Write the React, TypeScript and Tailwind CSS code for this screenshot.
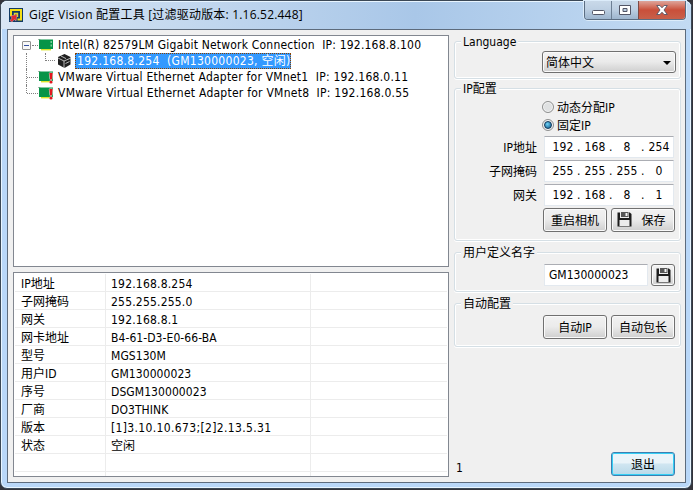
import React from 'react';

const nodes = [
  { name: 'Intel(R) 82579LM Gigabit Network Connection  IP: 192.168.8.100', cls: 'tracking-[0.2px]' },
  { name: 'VMware Virtual Ethernet Adapter for VMnet1  IP: 192.168.0.11', cls: 'tracking-[0.23px]' },
  { name: 'VMware Virtual Ethernet Adapter for VMnet8  IP: 192.168.0.55', cls: 'tracking-[0.25px]' },
];

const rows = [
  ['IP地址', '192.168.8.254'],
  ['子网掩码', '255.255.255.0'],
  ['网关', '192.168.8.1'],
  ['网卡地址', 'B4-61-D3-E0-66-BA'],
  ['型号', 'MGS130M'],
  ['用户ID', 'GM130000023'],
  ['序号', 'DSGM130000023'],
  ['厂商', 'DO3THINK'],
  ['版本', '[1]3.10.10.673;[2]2.13.5.31'],
  ['状态', '空闲'],
  ['', ''],
];

function Card({ alert = false }: { alert?: boolean }) {
  return (
    <svg width="16" height="14" viewBox="0 0 16 14" className="shrink-0">
      <path d="M0 1.5h2v9" fill="none" stroke="#a9b5ad" />
      <path d="M1 1.5h14V11H1z" fill="#079447" />
      <path d="M3 11h10v1.4H3z" fill="#d9e52a" />
      <path d="M12.5 3h1.5v2h-1.5zM12.5 6.5h1.5v2h-1.5z" fill="#7acb9a" />
      {alert && (
        <>
          <path d="M11.3 3h3.4l-.8 6.5h-1.8z" fill="#e2171e" stroke="#fff" strokeWidth=".8" paintOrder="stroke" />
          <circle cx="13" cy="12" r="1.6" fill="#e2171e" stroke="#fff" strokeWidth=".6" paintOrder="stroke" />
        </>
      )}
    </svg>
  );
}

function Disk() {
  return (
    <svg width="15" height="15" viewBox="0 0 15 15" className="shrink-0">
      <path d="M.5.5h12.3L14.5 2v12.5H.5z" fill="#1d1d1d" />
      <path d="M3 0h9v6H3z" fill="#ededed" />
      <path d="M4 0h7.5v5H4z" fill="#555" />
      <path d="M8.5 1h2v3h-2z" fill="#f4f4f4" />
      <path d="M2.5 8h10v6h-10z" fill="#ececec" />
    </svg>
  );
}

function Group({ title, className, children }: { title: string; className: string; children?: React.ReactNode }) {
  return (
    <section className={`flex w-[227px] flex-col rounded-[3px] border border-[#d5dfe5] shadow-[inset_0_0_0_1px_#fff,0_1px_0_#fff] ${className}`}>
      <h2 className="-mt-[8px] ml-[6px] h-4 self-start whitespace-nowrap bg-[#f0f0f0] px-[2px] leading-[17px]">{title}</h2>
      {children}
    </section>
  );
}

function Btn({ className = '', children }: { className?: string; children: React.ReactNode }) {
  return (
    <button className={`flex shrink-0 items-center justify-center rounded-[3px] border border-[#707070] bg-linear-to-b from-[#f2f2f2] from-0% via-[#ebebeb] via-48% to-[#cfcfcf] pt-[2px] shadow-[inset_0_0_0_1px_#fafafa] ${className}`}>
      {children}
    </button>
  );
}

function Radio({ label, on = false }: { label: string; on?: boolean }) {
  return (
    <div className="ml-[87px] flex h-[18px] items-center gap-[3px]">
      <span className="flex size-3 items-center justify-center rounded-full border border-[#8e8f8f] bg-[#dfe1e2] shadow-[inset_0_0_0_1px_#f5f5f5]">
        {on && <span className="size-[8px] rounded-full border border-[#123a5c] bg-radial-[at_40%_35%] from-[#6fd4f7] to-[#0b4f83]" />}
      </span>
      <span className="pt-px leading-4">{label}</span>
    </div>
  );
}

function Address({ label, parts }: { label: string; parts: string[] }) {
  return (
    <div className="mb-[2px] flex h-[22px] items-center">
      <span className="w-[82px] pt-px text-right leading-4">{label}</span>
      <div className="ml-[7px] flex h-[22px] w-[130px] items-center border border-[#e3e9ef] border-t-[#abadb3] bg-white pl-[7px] tracking-[0.2px]">
        {parts.map((p, i) => (
          <React.Fragment key={i}>
            <span className="w-[22px] text-center">{p}</span>
            {i < 3 && <span className="w-[10px] pl-[3px]">.</span>}
          </React.Fragment>
        ))}
      </div>
    </div>
  );
}

export default function App() {
  return (
    <div className="h-[490px] w-[693px] overflow-hidden bg-[#34343b] font-['DejaVu_Sans_Condensed','Noto_Sans_CJK_SC',sans-serif] text-[12px] leading-4 text-black">
      <div className="flex h-[489px] w-[692px] flex-col rounded-[7px] border border-[#3b4856] bg-[#b9d7f8] shadow-[inset_0_0_0_1px_#e8f5ff]">
        <header className="flex h-[28px] shrink-0 justify-between rounded-t-[6px] bg-linear-to-r from-[#d9e6f4] via-[#a9c7e8] via-60% to-[#c3dbf3] pl-2 shadow-[inset_0_1px_0_#e8f5ff]">
          <div className="flex items-center gap-[6px]">
            <svg width="14" height="15" viewBox="0 0 14 15">
              <path d="M0 0h14v14H0z" fill="#123b65" />
              <path d="M2 8V2h10v9.5H8.5" fill="none" stroke="#f5df16" strokeWidth="2" />
              <path d="M5.5 7V5.5h3V9" fill="none" stroke="#ded329" strokeWidth="1.4" />
              <path d="M1.5 8L8 6.5 7 13l-1.8-1.5L3 14l-2-1.5L3 10z" fill="#e12a30" stroke="#f3c6c0" strokeWidth=".4" />
            </svg>
            <h1 className="whitespace-pre font-['Open_Sans','Noto_Sans_CJK_SC',sans-serif] text-[12px] tracking-[0.2px]">GigE Vision 配置工具 [过滤驱动版本: 1.16.52.448]</h1>
          </div>
          <div className="mr-[5px] flex h-[19px] overflow-hidden rounded-b-[4px] border border-t-0 border-[#5b6d82] shadow-[0_0_0_1px_#dcecfa]">
            <div className="flex w-[27px] items-center justify-center border-r border-[#6c7f94] bg-linear-to-b from-[#c9d9e9] via-[#bed0e3] via-45% to-[#9db5ce] pt-[5px]">
              <svg width="13" height="6" viewBox="0 0 13 6"><rect x=".5" y=".5" width="12" height="4" rx="1" fill="#fff" stroke="#535666" /></svg>
            </div>
            <div className="flex w-[27px] items-center justify-center border-r border-[#7d4a45] bg-linear-to-b from-[#c9d9e9] via-[#bed0e3] via-45% to-[#9db5ce]">
              <svg width="12" height="10" viewBox="0 0 12 10"><path d="M.5.5h11v9H.5zM4 3.5v3h4v-3z" fill="#fff" fillRule="evenodd" stroke="#535666" /></svg>
            </div>
            <div className="flex w-[46px] items-center justify-center bg-linear-to-b from-[#dda49a] via-[#c94f3a] via-50% to-[#c8604a]">
              <svg width="12" height="10" viewBox="0 0 12 10"><path d="M.7.5h3.2L6 2.8 8.1.5h3.2L8 5l3.3 4.5H8.1L6 7.2 3.9 9.5H.7L4 5z" fill="#fff" stroke="#535666" strokeWidth=".9" /></svg>
            </div>
          </div>
        </header>

        <main className="ml-[6px] flex h-[454px] w-[679px] gap-[5px] border border-[#5d6b7c] bg-[#f0f0f0] pl-[5px]">
          <div className="flex w-[436px] shrink-0 flex-col gap-[5px] pt-[5px]">
            <div className="h-[232px] border border-[#828790] bg-white pt-px">
              <div className="flex h-4 items-center pl-[8px]">
                <span className="flex size-[9px] items-center justify-center rounded-[1px] border border-[#919191] bg-[#f7f7f7]"><span className="h-px w-[5px] bg-[#3550a0]" /></span>
                <span className="ml-px w-[6px] border-t border-dotted border-[#808080]" />
                <Card />
                <span className={`ml-[4px] whitespace-pre ${nodes[0].cls}`}>{nodes[0].name}</span>
              </div>
              <div className="flex h-4 items-center pl-[12px]">
                <span className="h-4 w-[19px] border-l border-dotted border-[#808080]" />
                <span className="-mt-2 mr-[2px] h-2 w-[10px] border-b border-l border-dotted border-[#808080]" />
                <svg width="15" height="14" viewBox="0 0 15 14" className="shrink-0">
                  <path d="M7.5 0l6 3v7.5l-6 3.5L1 10.5V3z" fill="#202020" />
                  <path d="M1 4l6 3v7M14 4L7 7M4 2l5 2.6M8.5 9.5l4-2" fill="none" stroke="#ddd" strokeWidth=".8" />
                </svg>
                <span className="ml-[3px] flex h-4 w-[216px] items-center whitespace-pre bg-[#3399ff] pl-[2px] tracking-[0.28px] text-white outline-1 -outline-offset-1 outline-dotted outline-[#8a4200]">192.168.8.254  (GM130000023, 空闲)</span>
              </div>
              {nodes.slice(1).map((n, i) => (
                <div key={n.name} className="flex h-4 items-center pl-[12px]">
                  <span className={`w-0 border-l border-dotted border-[#808080] ${i === 0 ? 'h-4' : 'h-2 self-start'}`} />
                  <span className="w-[11px] border-t border-dotted border-[#808080]" />
                  <Card alert />
                  <span className={`ml-[4px] whitespace-pre ${n.cls}`}>{n.name}</span>
                </div>
              ))}
            </div>
            <div className="h-[205px] overflow-hidden border border-[#828790] bg-white px-px pt-px">
              {rows.map(([k, v], i) => (
                <div key={i} className="grid h-[18px] grid-cols-[91px_205px_1fr] border-b border-[#ececec] leading-[21px]">
                  <span className="h-[17px] border-r border-[#ececec] pl-[6px]">{k}</span>
                  <span className={`h-[17px] whitespace-pre border-r border-[#ececec] pl-[5px] ${i === 8 ? 'tracking-[0.35px]' : i === 0 || i === 1 || i === 2 ? 'tracking-[0.2px]' : 'tracking-[0.07px]'}`}>{v}</span>
                  <span />
                </div>
              ))}
              <div className="grid h-1 grid-cols-[91px_205px_1fr]">
                <span className="border-r border-[#ececec]" />
                <span className="border-r border-[#ececec]" />
              </div>
            </div>
          </div>

          <aside className="flex flex-col">
            <Group title="Language" className="mt-[11px] h-[38px]">
              <div className="ml-[87px] mt-[1px] flex h-[22px] w-[134px] shrink-0 items-center justify-between rounded-[3px] border border-[#707070] bg-linear-to-b from-[#f2f2f2] via-[#ebebeb] via-48% to-[#cfcfcf] pl-[3px] pr-[4px] pt-[2px] shadow-[inset_0_0_0_1px_#fafafa]">
                <span>简体中文</span>
                <svg width="8" height="4" viewBox="0 0 8 4"><path d="M0 0h8L4 4z" /></svg>
              </div>
            </Group>
            <Group title="IP配置" className="mt-[9px] h-[153px]">
              <div className="mt-[1px]">
                <Radio label="动态分配IP" />
                <Radio label="固定IP" on />
              </div>
              <div className="mt-[2px]">
                <Address label="IP地址" parts={['192', '168', '8', '254']} />
                <Address label="子网掩码" parts={['255', '255', '255', '0']} />
                <Address label="网关" parts={['192', '168', '8', '1']} />
              </div>
              <div className="ml-[88px] flex gap-[4px]">
                <Btn className="h-6 w-[64px]">重启相机</Btn>
                <Btn className="h-6 w-[64px] gap-[9px] pr-[3px]"><span className="-mt-[3px]"><Disk /></span>保存</Btn>
              </div>
            </Group>
            <Group title="用户定义名字" className="mt-[11px] h-[40px]">
              <div className="ml-[89px] mt-[3px] flex gap-[3px]">
                <div className="flex h-[22px] w-[104px] items-center border border-[#e3e9ef] border-t-[#abadb3] bg-white pl-[4px]">GM130000023</div>
                <Btn className="h-[22px] w-[24px]"><span className="-mt-[2px]"><Disk /></span></Btn>
              </div>
            </Group>
            <Group title="自动配置" className="mt-[11px] h-[44px]">
              <div className="ml-[88px] mt-[3px] flex gap-[4px]">
                <Btn className="h-6 w-[64px]">自动IP</Btn>
                <Btn className="h-6 w-[64px]">自动包长</Btn>
              </div>
            </Group>
            <footer className="mt-[105px] flex h-6 items-end justify-between pl-[2px] pr-[6px]">
              <span>1</span>
              <button className="h-6 w-[64px] rounded-[3px] border border-[#3c7fb1] bg-linear-to-b from-[#eaf4f9] from-45% via-[#d0e6f1] via-50% to-[#b9d9e9] pt-[2px] shadow-[inset_0_0_0_1px_#35cff5]">退出</button>
            </footer>
          </aside>
        </main>
      </div>
    </div>
  );
}
